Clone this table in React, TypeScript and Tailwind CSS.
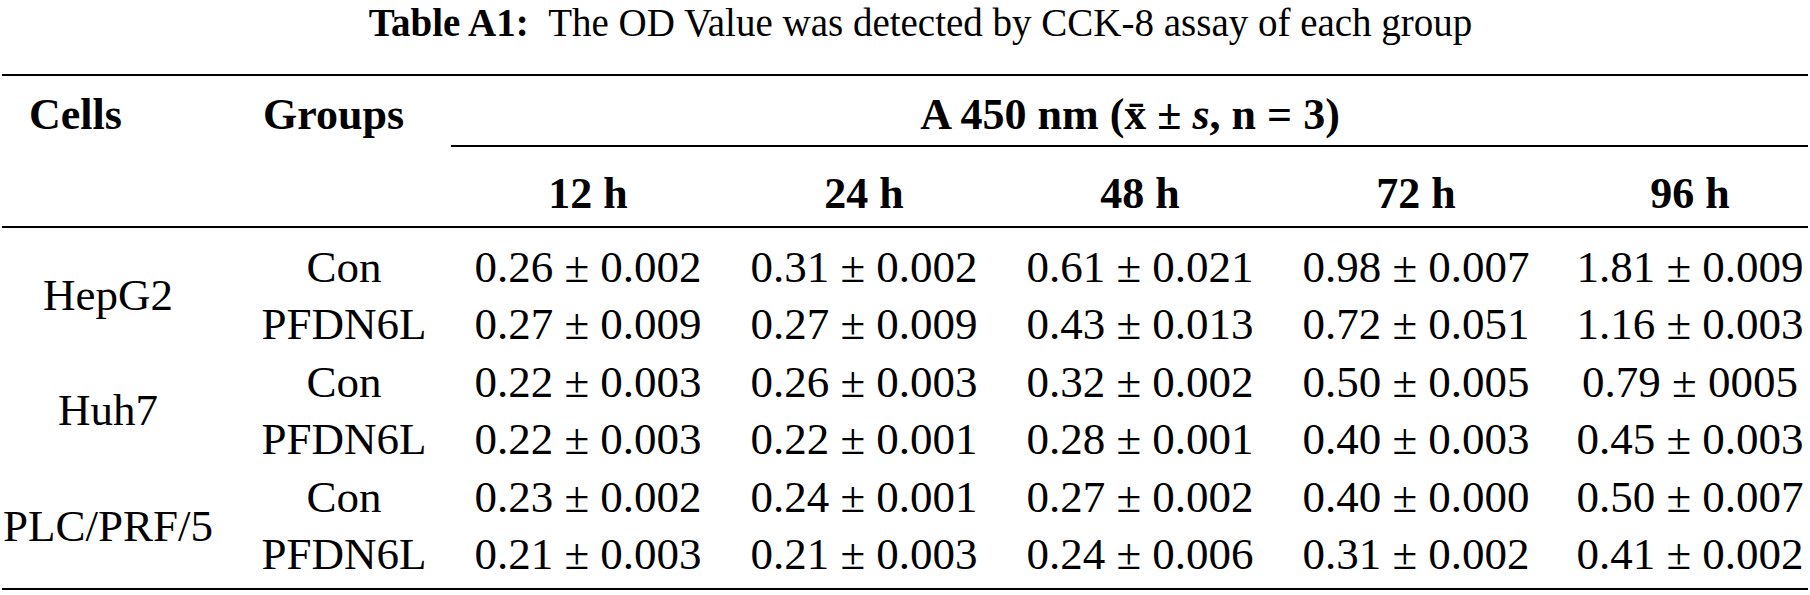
import React from "react";

const rows: { cell: string; group: string; vals: string[] }[] = [
  { cell: "HepG2", group: "Con", vals: ["0.26 ± 0.002", "0.31 ± 0.002", "0.61 ± 0.021", "0.98 ± 0.007", "1.81 ± 0.009"] },
  { cell: "HepG2", group: "PFDN6L", vals: ["0.27 ± 0.009", "0.27 ± 0.009", "0.43 ± 0.013", "0.72 ± 0.051", "1.16 ± 0.003"] },
  { cell: "Huh7", group: "Con", vals: ["0.22 ± 0.003", "0.26 ± 0.003", "0.32 ± 0.002", "0.50 ± 0.005", "0.79 ± 0005"] },
  { cell: "Huh7", group: "PFDN6L", vals: ["0.22 ± 0.003", "0.22 ± 0.001", "0.28 ± 0.001", "0.40 ± 0.003", "0.45 ± 0.003"] },
  { cell: "PLC/PRF/5", group: "Con", vals: ["0.23 ± 0.002", "0.24 ± 0.001", "0.27 ± 0.002", "0.40 ± 0.000", "0.50 ± 0.007"] },
  { cell: "PLC/PRF/5", group: "PFDN6L", vals: ["0.21 ± 0.003", "0.21 ± 0.003", "0.24 ± 0.006", "0.31 ± 0.002", "0.41 ± 0.002"] },
];

const cellNames = ["HepG2", "Huh7", "PLC/PRF/5"];
const hours = ["12 h", "24 h", "48 h", "72 h", "96 h"];

export default function App() {
  return (
    <div className="w-[1810px] h-[595px] bg-white text-black overflow-hidden font-['Liberation_Serif',serif]">
      <div className="h-[74px] pl-[31px] text-center text-[39px] leading-[46px] whitespace-nowrap">
        <span className="font-bold">Table A1:</span>
        <span>{"\u00a0\u00a0"}The OD Value was detected by CCK-8 assay of each group</span>
      </div>
      <div className="ml-[2px] w-[1808px]">
        <div className="h-[2px] w-[1806px] bg-black" />
        {/* header row 1 */}
        <div className="h-[69px] flex font-bold text-[44px] leading-[62px] pt-[8px] whitespace-nowrap">
          <div className="w-[222px] pl-[27px]">Cells</div>
          <div className="w-[226px] pl-[39px]">Groups</div>
          <div className="flex-1 text-center">
            A 450 nm (x̄ ± <span className="italic">s</span>, n = 3)
          </div>
        </div>
        <div className="h-[1.5px] ml-[449px] w-[1357px] bg-black" />
        {/* header row 2 */}
        <div className="h-[79px] grid grid-cols-[222px_226px_276px_276px_276px_276px_256px] font-bold text-[44px] leading-[64px] pt-[15px] whitespace-nowrap">
          <div />
          <div />
          {hours.map((h, i) => (
            <div key={h} className={i === 4 ? "text-center pl-[16px]" : "text-center"}>
              {h}
            </div>
          ))}
        </div>
        <div className="h-[2px] w-[1806px] bg-black" />
        {/* body */}
        <div className="pt-[11px] pb-[4px] grid grid-cols-[222px_226px_276px_276px_276px_276px_256px] grid-rows-[repeat(6,57.6px)] text-[45px] leading-[57.6px] whitespace-nowrap">
          {cellNames.map((c, ci) => (
            <div
              key={c}
              className="col-start-1 row-span-2 flex items-center justify-center pr-[10px]"
              style={{ gridRowStart: ci * 2 + 1 }}
            >
              {c}
            </div>
          ))}
          {rows.map((r, ri) => (
            <React.Fragment key={ri}>
              <div className="col-start-2 text-center pl-[14px]" style={{ gridRowStart: ri + 1 }}>
                {r.group}
              </div>
              {r.vals.map((v, vi) => (
                <div
                  key={vi}
                  className={vi === 4 ? "text-center pl-[16px]" : "text-center"}
                  style={{ gridRowStart: ri + 1, gridColumnStart: vi + 3 }}
                >
                  {v}
                </div>
              ))}
            </React.Fragment>
          ))}
        </div>
        <div className="h-[2px] w-[1806px] bg-black" />
      </div>
    </div>
  );
}
